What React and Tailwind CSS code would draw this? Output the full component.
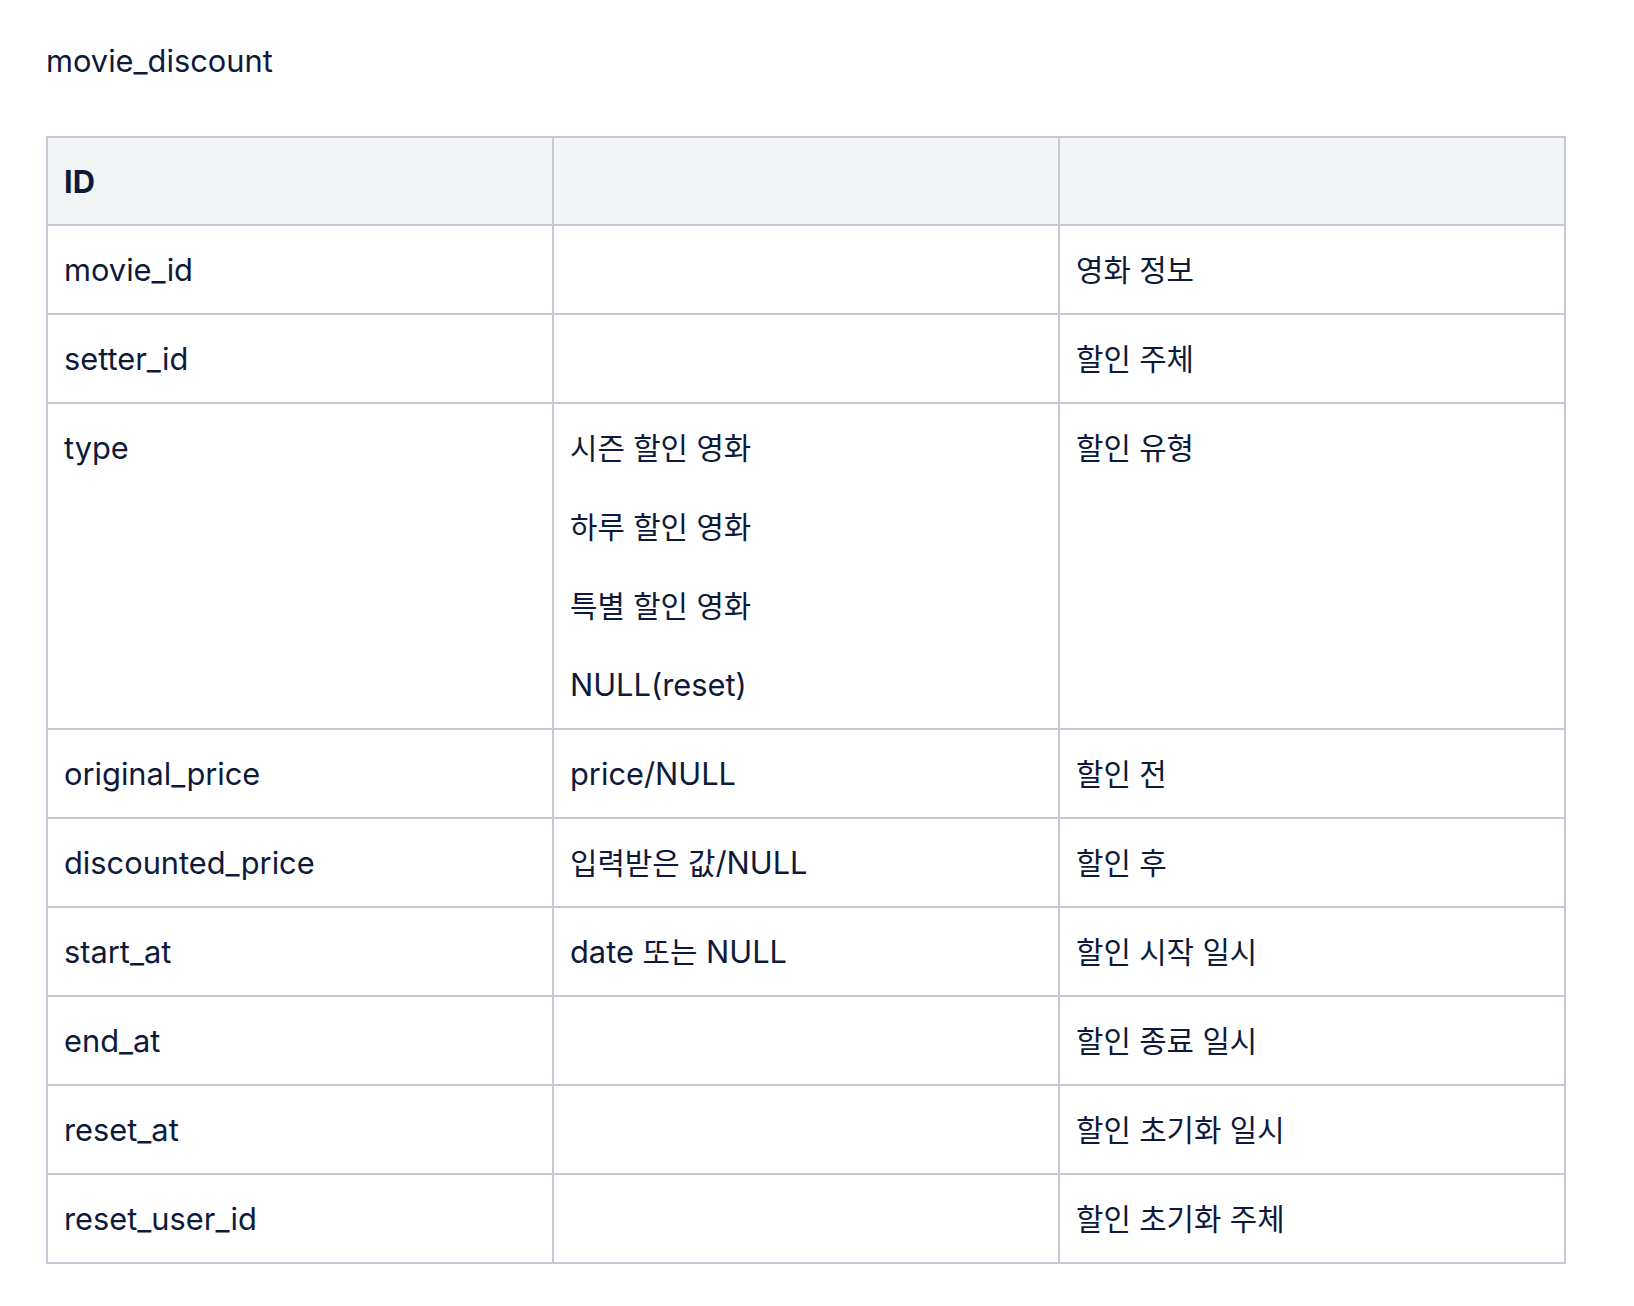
import React from 'react';

const ROWS = [
    { name: 'movie_id', value: [], desc: '영화 정보' },
    { name: 'setter_id', value: [], desc: '할인 주체' },
    { name: 'type', value: ['시즌 할인 영화', '하루 할인 영화', '특별 할인 영화', 'NULL(reset)'], desc: '할인 유형' },
    { name: 'original_price', value: ['price/NULL'], desc: '할인 전' },
    { name: 'discounted_price', value: ['입력받은 값/NULL'], desc: '할인 후' },
    { name: 'start_at', value: ['date 또는 NULL'], desc: '할인 시작 일시' },
    { name: 'end_at', value: [], desc: '할인 종료 일시' },
    { name: 'reset_at', value: [], desc: '할인 초기화 일시' },
    { name: 'reset_user_id', value: [], desc: '할인 초기화 주체' },
];

const cell = 'w-1/3 border-2 border-[#c5c9d4] px-[16px] align-top';

// Hangul runs render a touch narrower in the original
const Text = ({ children }) =>
    children.split(/([가-힣][가-힣 ]*[가-힣]|[가-힣])/).map((part, i) =>
        /[가-힣]/.test(part) ? (
            <span key={i} className="text-[29.8px] leading-none">{part}</span>
        ) : (
            part
        )
    );

const App = () => {
    return (
        <div
            className="min-h-screen bg-white px-[46px] pt-[38px] text-[30.8px] leading-[45px] text-[#0e1a3a]"
            style={{ fontFamily: 'Inter, "Noto Sans CJK KR", sans-serif' }}
        >
            <p>movie_discount</p>

            <table className="mt-[53px] w-[1520px] table-fixed border-collapse">
                <thead>
                    <tr className="bg-[#f3f4f6]">
                        <th className={`${cell} pt-[21px] pb-[20px] text-left font-bold`}>ID</th>
                        <th className={`${cell} pt-[21px] pb-[20px]`}></th>
                        <th className={`${cell} pt-[21px] pb-[20px]`}></th>
                    </tr>
                </thead>
                <tbody>
                    {ROWS.map((row) => (
                        <tr key={row.name}>
                            <td className={`${cell} py-[21px]`}>{row.name}</td>
                            <td className={`${cell} py-[21px]`}>
                                <div className="flex flex-col gap-[34px]">
                                    {row.value.map((v) => (
                                        <span key={v} className="block h-[45px]">
                                            <Text>{v}</Text>
                                        </span>
                                    ))}
                                </div>
                            </td>
                            <td className={`${cell} py-[21px]`}>
                                <div className="h-[45px]">
                                    <Text>{row.desc}</Text>
                                </div>
                            </td>
                        </tr>
                    ))}
                </tbody>
            </table>
        </div>
    );
};

export default App;
